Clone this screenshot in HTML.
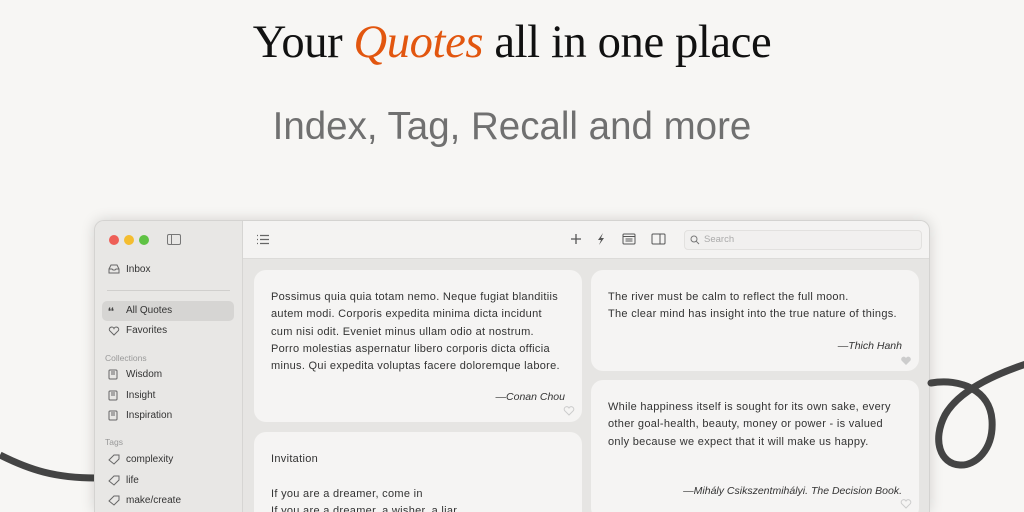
<!DOCTYPE html>
<html><head><meta charset="utf-8"><style>
*{margin:0;padding:0;box-sizing:border-box}
body{width:1024px;height:512px;overflow:hidden;background:#f7f6f4;position:relative;font-family:"Liberation Sans",sans-serif}
.h1{position:absolute;top:15px;left:0;width:1024px;text-align:center;font-family:"Liberation Serif",serif;font-size:46.6px;color:#111;letter-spacing:-0.4px}
.h1 i{color:#e2560f}
.h2{position:absolute;top:105px;left:0;width:1024px;text-align:center;font-size:38.5px;color:#707070}
.win{position:absolute;left:94px;top:220px;width:836px;height:292px;border-radius:10px 10px 0 0;background:#e6e5e3;box-shadow:0 0 14px rgba(0,0,0,.15);overflow:hidden;border:1px solid #d4d3d1;border-bottom:none}
.side{position:absolute;left:0;top:0;width:148px;height:100%;background:#e8e7e5;border-right:1px solid #d6d5d3}
.tb{position:absolute;left:148px;top:0;right:0;height:38px;background:#f4f3f2;border-bottom:1px solid #dcdbd9}
.dot{position:absolute;top:14px;width:10px;height:10px;border-radius:50%}
.it{position:absolute;left:31px;font-size:10px;color:#333;line-height:12px}
.lab{position:absolute;left:10px;font-size:8.5px;color:#999}
.ic{position:absolute;left:13px}
.card{position:absolute;background:#f5f4f3;border-radius:12px;padding:19px 20px 19px 17px;font-size:11px;letter-spacing:0.3px;line-height:17.3px;color:#333}
.au{position:absolute;right:17px;font-style:italic;font-size:10.5px;color:#333;letter-spacing:0}
.hrt{position:absolute;right:7px;width:12px;height:11px}
svg{display:block}
</style></head><body>
<div class="h1">Your <i>Quotes</i> all in one place</div>
<div class="h2">Index, Tag, Recall and more</div>
<svg style="position:absolute;left:0;top:0" width="1024" height="512"><path d="M0,455 C30,470 55,478 96,478" stroke="#444" stroke-width="7" fill="none"/></svg>
<div class="win">
 <div class="side">
  <div class="dot" style="left:14px;background:#ee5f57"></div>
  <div class="dot" style="left:29px;background:#f4bd30"></div>
  <div class="dot" style="left:44px;background:#5fc244"></div>
  <div style="position:absolute;left:72px;top:13px;width:14px;height:11px;border:1.3px solid #777;border-radius:2px"><div style="position:absolute;left:3px;top:0;width:1.3px;height:100%;background:#777"></div></div>
  <svg class="ic" style="top:43px" width="12" height="10"><path d="M1,5 L3,1 H9 L11,5 V9 H1Z M1,5 H4 L5,6 H7 L8,5 H11" stroke="#666" fill="none" stroke-width="1"/></svg>
  <div class="it" style="top:43px">Inbox</div>
  <div style="position:absolute;left:12px;width:123px;top:69px;height:1px;background:#d0cfcd"></div>
  <div style="position:absolute;left:7px;top:80px;width:132px;height:20px;background:#d6d5d3;border-radius:5px"></div>
  <div class="ic" style="top:86px;font-size:9px;font-weight:bold;color:#444;line-height:8px">❛❛</div>
  <div class="it" style="top:84px">All Quotes</div>
  <svg class="ic" style="top:105px" width="12" height="10"><path d="M6,9 L1.5,4.5 A2.3,2.3 0 0 1 6,2.5 A2.3,2.3 0 0 1 10.5,4.5Z" stroke="#666" fill="none"/></svg>
  <div class="it" style="top:104px">Favorites</div>
  <div class="lab" style="top:132px">Collections</div>
  <svg class="ic" style="top:148px" width="10" height="11"><rect x="1" y="1" width="8" height="9" rx="1" stroke="#666" fill="none"/><path d="M3,3H7M3,5H7" stroke="#666"/></svg>
  <div class="it" style="top:148px">Wisdom</div>
  <svg class="ic" style="top:169px" width="10" height="11"><rect x="1" y="1" width="8" height="9" rx="1" stroke="#666" fill="none"/><path d="M3,3H7M3,5H7" stroke="#666"/></svg>
  <div class="it" style="top:169px">Insight</div>
  <svg class="ic" style="top:189px" width="10" height="11"><rect x="1" y="1" width="8" height="9" rx="1" stroke="#666" fill="none"/><path d="M3,3H7M3,5H7" stroke="#666"/></svg>
  <div class="it" style="top:189px">Inspiration</div>
  <div class="lab" style="top:216px">Tags</div>
  <svg class="ic" style="top:233px" width="12" height="11"><path d="M1,6 L6,1 H11 V5 L6,10Z" stroke="#666" fill="none"/></svg>
  <div class="it" style="top:233px">complexity</div>
  <svg class="ic" style="top:254px" width="12" height="11"><path d="M1,6 L6,1 H11 V5 L6,10Z" stroke="#666" fill="none"/></svg>
  <div class="it" style="top:254px">life</div>
  <svg class="ic" style="top:274px" width="12" height="11"><path d="M1,6 L6,1 H11 V5 L6,10Z" stroke="#666" fill="none"/></svg>
  <div class="it" style="top:274px">make/create</div>
 </div>
 <div class="tb">
  <svg style="position:absolute;left:13px;top:13px" width="14" height="11"><path d="M4,1.5H13M4,5.5H13M4,9.5H13M1,1.5H2M1,5.5H2M1,9.5H2" stroke="#666" stroke-width="1.2"/></svg>
  <svg style="position:absolute;left:327px;top:12px" width="12" height="12"><path d="M6,1V11M1,6H11" stroke="#555" stroke-width="1.3"/></svg>
  <svg style="position:absolute;left:353px;top:11px" width="10" height="14"><path d="M7,1 L2,8 H5 L3,13 L8,6 H5Z" fill="#555"/></svg>
  <svg style="position:absolute;left:379px;top:12px" width="14" height="12"><rect x="1" y="1" width="12" height="10" rx="1" stroke="#555" fill="none"/><path d="M1,3.5H13M3.5,6H10.5M3.5,8H10.5" stroke="#555"/></svg>
  <svg style="position:absolute;left:408px;top:12px" width="15" height="12"><rect x="1" y="1" width="13" height="10" rx="1" stroke="#555" fill="none"/><path d="M9,1V11" stroke="#555"/></svg>
  <div style="position:absolute;left:441px;top:9px;width:238px;height:20px;border:1px solid #e2e1df;border-radius:4px;background:#f1f0ef;font-size:9.5px;color:#aaa;line-height:18px;padding-left:19px">Search
   <svg style="position:absolute;left:5px;top:4px" width="10" height="10"><circle cx="4" cy="4" r="3" stroke="#777" fill="none"/><path d="M6.3,6.3L9,9" stroke="#777"/></svg></div>
 </div>
 <div class="card" style="left:159px;top:49px;width:328px;height:152px">Possimus quia quia totam nemo. Neque fugiat blanditiis autem modi. Corporis expedita minima dicta incidunt cum nisi odit. Eveniet minus ullam odio at nostrum. Porro molestias aspernatur libero corporis dicta officia minus. Qui expedita voluptas facere doloremque labore.
  <div class="au" style="top:119px">—Conan Chou</div>
  <svg class="hrt" style="top:135px"><path d="M6,10 L1.5,5.5 A2.4,2.4 0 0 1 6,3 A2.4,2.4 0 0 1 10.5,5.5Z" stroke="#ccc" fill="none"/></svg></div>
 <div class="card" style="left:159px;top:211px;width:328px;height:120px">Invitation<br><br>If you are a dreamer, come in<br>If you are a dreamer, a wisher, a liar,</div>
 <div class="card" style="left:496px;top:49px;width:328px;height:101px">The river must be calm to reflect the full moon.<br>The clear mind has insight into the true nature of things.
  <div class="au" style="top:68px">—Thich Hanh</div>
  <svg class="hrt" style="top:85px"><path d="M6,10 L1.5,5.5 A2.4,2.4 0 0 1 6,3 A2.4,2.4 0 0 1 10.5,5.5Z" fill="#ccc"/></svg></div>
 <div class="card" style="left:496px;top:159px;width:328px;height:140px">While happiness itself is sought for its own sake, every other goal-health, beauty, money or power - is valued only because we expect that it will make us happy.
  <div class="au" style="top:103px">—Mihály Csikszentmihályi. The Decision Book.</div>
  <svg class="hrt" style="top:118px"><path d="M6,10 L1.5,5.5 A2.4,2.4 0 0 1 6,3 A2.4,2.4 0 0 1 10.5,5.5Z" stroke="#ccc" fill="none"/></svg></div>
</div>
<svg style="position:absolute;left:0;top:0" width="1024" height="512"><path d="M931,383 C960,378 990,390 992,420 C994,450 975,466 960,465 C940,464 932,440 945,415 C958,392 990,376 1026,364" stroke="#444" stroke-width="7" fill="none" stroke-linecap="round"/></svg>
</body></html>
